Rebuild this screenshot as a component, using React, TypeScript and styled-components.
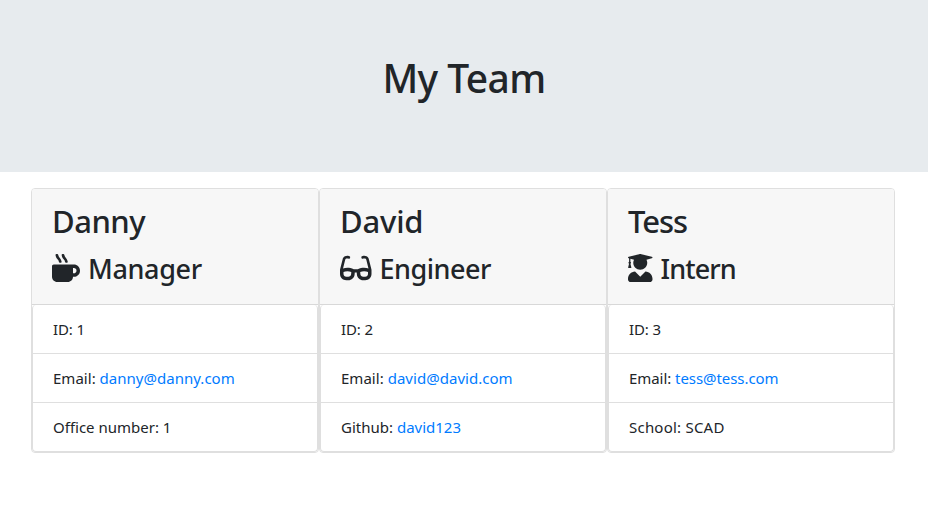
import React from "react";
import styled, { createGlobalStyle } from "styled-components";
import { FaGlasses, FaMugHot, FaUserGraduate } from "react-icons/fa";
import type { IconType } from "react-icons";

const GlobalStyle = createGlobalStyle`
  *, *::before, *::after { box-sizing: border-box; }
  body {
    margin: 0;
    background: #fff;
    color: #212529;
    font-family: "Segoe UI", "Noto Sans", sans-serif;
    font-size: 15px;
    line-height: 24px;
  }
`;

const Banner = styled.header`
  height: 172px;
  padding-top: 54px;
  background: #e7ebee;
  text-align: center;
`;

const Title = styled.h1`
  margin: 0;
  font-size: 39px;
  font-weight: 500;
  line-height: 48px;
  letter-spacing: -0.6px;
`;

const Team = styled.main`
  display: flex;
  padding: 16px 31px 0;
`;

const Card = styled.section`
  width: 288px;
  border: 1px solid #dfdfdf;
  border-radius: 4px;
  background: #fff;
`;

const CardHeader = styled.div`
  height: 116px;
  padding: 13px 20px 0;
  background: #f7f7f7;
  border-bottom: 1px solid #d8d8d8;
  border-radius: 3px 3px 0 0;
`;

const Name = styled.h2<{ $spacing: number }>`
  margin: 0 0 8px;
  font-size: 31px;
  font-weight: 500;
  line-height: 39px;
  letter-spacing: ${({ $spacing }) => $spacing}px;
`;

const Role = styled.h3<{ $spacing: number; $iconWidth: number }>`
  display: flex;
  align-items: center;
  gap: 8px;
  margin: 0;
  font-size: 27px;
  font-weight: 500;
  line-height: 39px;
  letter-spacing: ${({ $spacing }) => $spacing}px;

  svg {
    flex: none;
    width: ${({ $iconWidth }) => $iconWidth}px;
    height: 28px;
    margin-bottom: 1px;
  }
`;

const Details = styled.ul`
  margin: 0;
  padding: 0;
  list-style: none;
  border: solid #dfdfdf;
  border-width: 0 1px 1px;
  border-radius: 4px;
`;

const Detail = styled.li<{ $spacing: number }>`
  height: 49px;
  padding: 12px 20px;
  letter-spacing: ${({ $spacing }) => $spacing}px;

  & + & { border-top: 1px solid #dfdfdf; }
  &:first-child { height: 48px; }
`;

const Link = styled.a`
  color: #007bff;
  text-decoration: none;
`;

type Line = { label: string; value: string; href?: string; spacing: number };
type Member = {
  name: string;
  nameSpacing: number;
  role: string;
  roleSpacing: number;
  icon: IconType;
  iconWidth: number;
  lines: Line[];
};

const members: Member[] = [
  {
    name: "Danny", nameSpacing: -0.5, role: "Manager", roleSpacing: -0.35, icon: FaMugHot, iconWidth: 28,
    lines: [
      { label: "ID", value: "1", spacing: -0.15 },
      { label: "Email", value: "danny@danny.com", href: "mailto:danny@danny.com", spacing: 0.02 },
      { label: "Office number", value: "1", spacing: 0 },
    ],
  },
  {
    name: "David", nameSpacing: -0.2, role: "Engineer", roleSpacing: -0.5, icon: FaGlasses, iconWidth: 31.5,
    lines: [
      { label: "ID", value: "2", spacing: -0.15 },
      { label: "Email", value: "david@david.com", href: "mailto:david@david.com", spacing: 0.03 },
      { label: "Github", value: "david123", href: "https://github.com/david123", spacing: 0 },
    ],
  },
  {
    name: "Tess", nameSpacing: -1, role: "Intern", roleSpacing: -0.9, icon: FaUserGraduate, iconWidth: 24.5,
    lines: [
      { label: "ID", value: "3", spacing: -0.15 },
      { label: "Email", value: "tess@tess.com", href: "mailto:tess@tess.com", spacing: -0.06 },
      { label: "School", value: "SCAD", spacing: 0.22 },
    ],
  },
];

export default function App() {
  return (
    <>
      <GlobalStyle />
      <Banner>
        <Title>My Team</Title>
      </Banner>
      <Team>
        {members.map(({ name, nameSpacing, role, roleSpacing, icon: Icon, iconWidth, lines }) => (
          <Card key={name}>
            <CardHeader>
              <Name $spacing={nameSpacing}>{name}</Name>
              <Role $spacing={roleSpacing} $iconWidth={iconWidth}>
                <Icon />
                <span>{role}</span>
              </Role>
            </CardHeader>
            <Details>
              {lines.map(({ label, value, href, spacing }) => (
                <Detail key={label} $spacing={spacing}>
                  {label}: {href ? <Link href={href}>{value}</Link> : value}
                </Detail>
              ))}
            </Details>
          </Card>
        ))}
      </Team>
    </>
  );
}
